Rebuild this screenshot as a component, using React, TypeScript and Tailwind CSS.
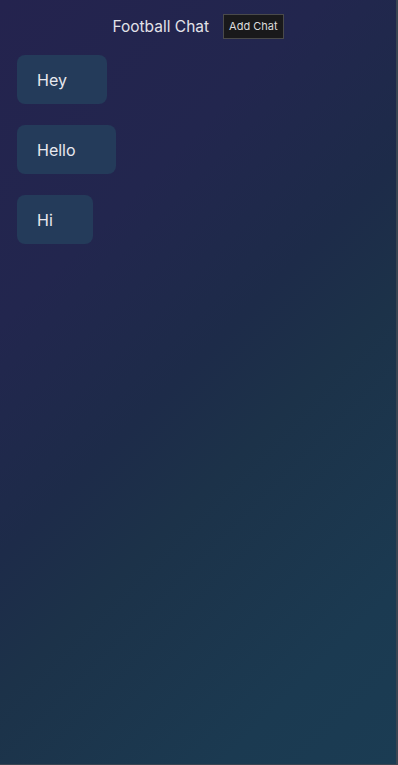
export default function App() {
  const chats = ["Hey", "Hello", "Hi"];

  return (
    <div className="flex min-h-[765px] flex-col border-r-2 border-b border-[#3a4552] bg-[linear-gradient(135deg,#24234e_0%,#22264e_28%,#1d2b49_48%,#1c3249_60%,#1b3a51_85%,#1b3c53_100%)] font-['Inter',sans-serif]">
      {/* Header */}
      <header className="flex items-center justify-center gap-[14px] pt-[14px]">
        <h1 className="text-[15.5px] text-[#e2e2e8]">Football Chat</h1>
        <button
          type="button"
          className="h-[25px] border border-[#4a4a4a] bg-[#19191b] px-[5px] text-[11px] text-[#dcdcdc]"
        >
          Add Chat
        </button>
      </header>

      {/* Chat list */}
      <main className="flex flex-col items-start gap-[21px] px-[17px] pt-[16px]">
        {chats.map((chat) => (
          <div
            key={chat}
            className="flex h-[49px] items-center rounded-[8px] bg-[#243b5a] pl-[20px] pr-[40px] text-[16px] text-[#e8e8ee]"
          >
            {chat}
          </div>
        ))}
      </main>
    </div>
  );
}
